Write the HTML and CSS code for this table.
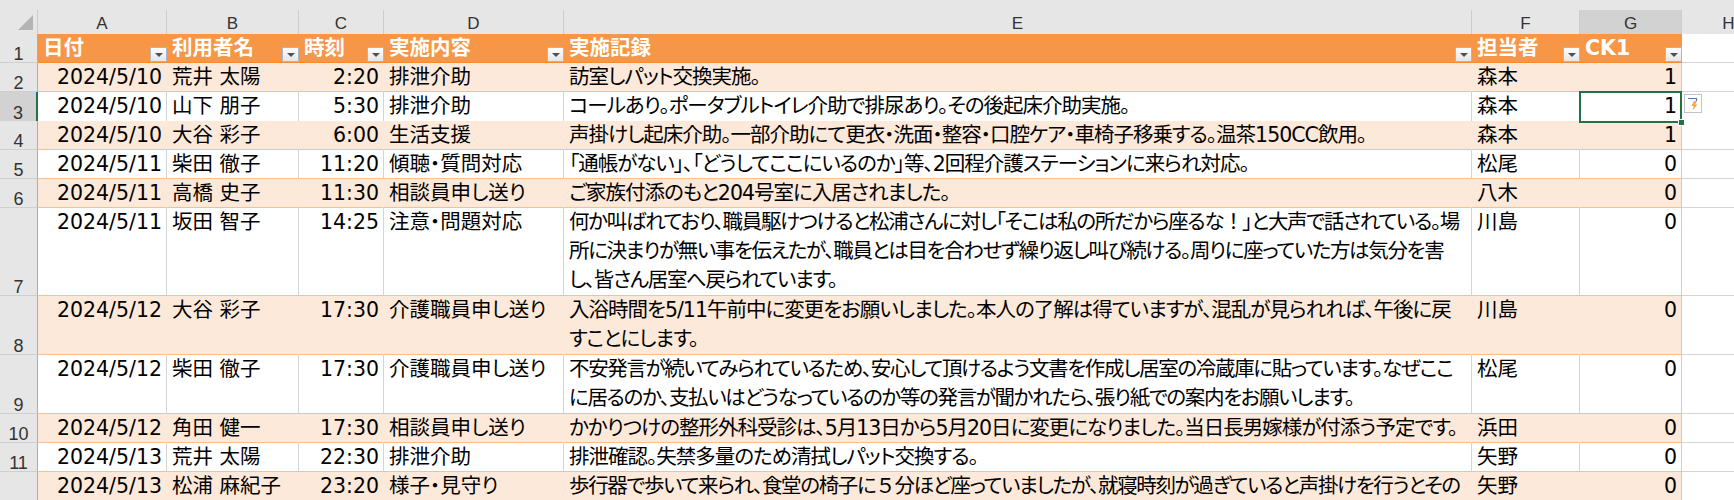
FILE: index.html
```html
<!DOCTYPE html>
<html lang="ja">
<head>
<meta charset="utf-8">
<title>介護記録</title>
<link rel="stylesheet" href="styles.css">
</head>
<body>
<div class="app">
  <div class="topband"></div>

  <div class="row colhdr">
    <div class="corner"><svg width="37" height="23" viewBox="0 0 37 23"><polygon points="33,5 33,20 18,20" fill="#b4b4b4"/></svg></div>
    <div class="ch">A</div>
    <div class="ch">B</div>
    <div class="ch">C</div>
    <div class="ch">D</div>
    <div class="ch">E</div>
    <div class="ch">F</div>
    <div class="ch sel">G</div>
    <div class="ch">H</div>
  </div>

  <div class="row thead r1">
    <div class="rh">1</div>
    <div class="c th">日付<span class="fb"></span></div>
    <div class="c th">利用者名<span class="fb"></span></div>
    <div class="c th">時刻<span class="fb"></span></div>
    <div class="c th">実施内容<span class="fb"></span></div>
    <div class="c th">実施記録<span class="fb"></span></div>
    <div class="c th">担当者<span class="fb"></span></div>
    <div class="c th g">CK1<span class="fb"></span></div>
    <div class="c out"></div>
  </div>

  <div class="row band r1">
    <div class="rh">2</div>
    <div class="c n">2024/5/10</div>
    <div class="c">荒井 太陽</div>
    <div class="c n">2:20</div>
    <div class="c">排泄介助</div>
    <div class="c memo">訪室しパット交換実施。</div>
    <div class="c">森本</div>
    <div class="c n g">1</div>
    <div class="c out"></div>
  </div>

  <div class="row r1">
    <div class="rh sel">3</div>
    <div class="c n">2024/5/10</div>
    <div class="c">山下 朋子</div>
    <div class="c n">5:30</div>
    <div class="c">排泄介助</div>
    <div class="c memo">コールあり。ポータブルトイレ介助で排尿あり。その後起床介助実施。</div>
    <div class="c">森本</div>
    <div class="c n g active">1<span class="selbox"></span><span class="handle"></span><span class="flash"><svg width="18" height="19" viewBox="0 0 18 19"><rect x="0.5" y="0.5" width="17" height="18" fill="#fff" stroke="#c3c3c3"/><path d="M4 4.5 H12.5 V7" fill="none" stroke="#4a7ebb" stroke-width="1.2"/><polygon points="10,7 13,7 11.2,10.5 13.5,10.5 8.5,16.5 9.8,12 7.5,12" fill="#f0a848"/></svg></span></div>
    <div class="c out"></div>
  </div>

  <div class="row band r1">
    <div class="rh">4</div>
    <div class="c n">2024/5/10</div>
    <div class="c">大谷 彩子</div>
    <div class="c n">6:00</div>
    <div class="c">生活支援</div>
    <div class="c memo">声掛けし起床介助。一部介助にて更衣・洗面・整容・口腔ケア・車椅子移乗する。温茶150CC飲用。</div>
    <div class="c">森本</div>
    <div class="c n g">1</div>
    <div class="c out"></div>
  </div>

  <div class="row r1">
    <div class="rh">5</div>
    <div class="c n">2024/5/11</div>
    <div class="c">柴田 徹子</div>
    <div class="c n">11:20</div>
    <div class="c">傾聴・質問対応</div>
    <div class="c memo">「通帳がない」、「どうしてここにいるのか」等、2回程介護ステーションに来られ対応。</div>
    <div class="c">松尾</div>
    <div class="c n g">0</div>
    <div class="c out"></div>
  </div>

  <div class="row band r1">
    <div class="rh">6</div>
    <div class="c n">2024/5/11</div>
    <div class="c">高橋 史子</div>
    <div class="c n">11:30</div>
    <div class="c">相談員申し送り</div>
    <div class="c memo">ご家族付添のもと204号室に入居されました。</div>
    <div class="c">八木</div>
    <div class="c n g">0</div>
    <div class="c out"></div>
  </div>

  <div class="row r3">
    <div class="rh">7</div>
    <div class="c n">2024/5/11</div>
    <div class="c">坂田 智子</div>
    <div class="c n">14:25</div>
    <div class="c">注意・問題対応</div>
    <div class="c memo tight">何か叫ばれており、職員駆けつけると松浦さんに対し「そこは私の所だから座るな<span class="fw">！</span>」と大声で話されている。場<br>所に決まりが無い事を伝えたが、職員とは目を合わせず繰り返し叫び続ける。周りに座っていた方は気分を害<br>し、皆さん居室へ戻られています。</div>
    <div class="c">川島</div>
    <div class="c n g">0</div>
    <div class="c out"></div>
  </div>

  <div class="row band r2">
    <div class="rh">8</div>
    <div class="c n">2024/5/12</div>
    <div class="c">大谷 彩子</div>
    <div class="c n">17:30</div>
    <div class="c">介護職員申し送り</div>
    <div class="c memo">入浴時間を5/11午前中に変更をお願いしました。本人の了解は得ていますが、混乱が見られれば、午後に戻<br>すことにします。</div>
    <div class="c">川島</div>
    <div class="c n g">0</div>
    <div class="c out"></div>
  </div>

  <div class="row r2">
    <div class="rh">9</div>
    <div class="c n">2024/5/12</div>
    <div class="c">柴田 徹子</div>
    <div class="c n">17:30</div>
    <div class="c">介護職員申し送り</div>
    <div class="c memo tight">不安発言が続いてみられているため、安心して頂けるよう文書を作成し居室の冷蔵庫に貼っています。なぜここ<br>に居るのか、支払いはどうなっているのか等の発言が聞かれたら、張り紙での案内をお願いします。</div>
    <div class="c">松尾</div>
    <div class="c n g">0</div>
    <div class="c out"></div>
  </div>

  <div class="row band r1">
    <div class="rh">10</div>
    <div class="c n">2024/5/12</div>
    <div class="c">角田 健一</div>
    <div class="c n">17:30</div>
    <div class="c">相談員申し送り</div>
    <div class="c memo">かかりつけの整形外科受診は、5月13日から5月20日に変更になりました。当日長男嫁様が付添う予定です。</div>
    <div class="c">浜田</div>
    <div class="c n g">0</div>
    <div class="c out"></div>
  </div>

  <div class="row r1">
    <div class="rh">11</div>
    <div class="c n">2024/5/13</div>
    <div class="c">荒井 太陽</div>
    <div class="c n">22:30</div>
    <div class="c">排泄介助</div>
    <div class="c memo">排泄確認。失禁多量のため清拭しパット交換する。</div>
    <div class="c">矢野</div>
    <div class="c n g">0</div>
    <div class="c out"></div>
  </div>

  <div class="row band r3">
    <div class="rh">12</div>
    <div class="c n">2024/5/13</div>
    <div class="c">松浦 麻紀子</div>
    <div class="c n">23:20</div>
    <div class="c">様子・見守り</div>
    <div class="c memo tight">歩行器で歩いて来られ、食堂の椅子に<span class="fw">５</span>分ほど座っていましたが、就寝時刻が過ぎていると声掛けを行うとその</div>
    <div class="c">矢野</div>
    <div class="c n g">0</div>
    <div class="c out"></div>
  </div>
</div>
</body>
</html>
```

FILE: styles.css
```css
html, body {
  margin: 0;
  padding: 0;
  background: #ffffff;
  overflow: hidden;
}

.app {
  width: 1734px;
  height: 500px;
  overflow: hidden;
  font-family: "DejaVu Sans", "Noto Sans CJK JP", sans-serif;
}

.topband {
  height: 10px;
  background: #e6e6e6;
}

.row {
  display: grid;
  grid-template-columns: 38px 129px 132px 85px 180px 908px 108px 102px 94px;
}

.r1 { height: 29px; }
.r2 { height: 59px; }
.r3 { height: 88px; }

/* column letters */
.colhdr {
  height: 24px;
  background: #e6e6e6;
}

.corner,
.ch {
  box-sizing: border-box;
  border-right: 1px solid #cdcdcd;
  border-bottom: 1px solid #9e9e9e;
  background: #e6e6e6;
}

.corner svg {
  display: block;
}

.ch {
  font-family: "Liberation Sans", sans-serif;
  font-size: 17px;
  line-height: 20px;
  padding-top: 4px;
  text-align: center;
  color: #333333;
}

.ch.sel {
  background: #d2d2d2;
  border-bottom: 2px solid #217346;
}

/* row numbers */
.rh {
  box-sizing: border-box;
  background: #e6e6e6;
  border-right: 1px solid #ababab;
  border-bottom: 1px solid #cfcfcf;
  display: flex;
  align-items: flex-end;
  justify-content: center;
  font-family: "Liberation Sans", sans-serif;
  font-size: 18px;
  line-height: 16px;
  color: #333333;
}

.rh.sel {
  background: #d2d2d2;
  border-right: 2px solid #217346;
}

/* data cells */
.c {
  box-sizing: border-box;
  padding: 0 5px;
  white-space: nowrap;
  overflow: hidden;
  font-size: 20.5px;
  line-height: 29px;
  color: #000000;
  background: #ffffff;
  border-right: 1px solid #d4d4d4;
  border-bottom: 1px solid #fabf8f;
  font-feature-settings: "palt";
}

.c.memo {
  letter-spacing: -1px;
}

.c.memo.tight {
  letter-spacing: -1.35px;
}

.fw {
  font-feature-settings: normal;
}

.c.n {
  text-align: right;
  padding-right: 4px;
}

.band .c {
  background: #fde9d9;
  border-right-color: #fde9d9;
}

.row .c.g {
  border-right-color: #fabf8f;
}

.row .c.out {
  background: #ffffff;
  border-right-color: #d4d4d4;
  border-bottom-color: #d4d4d4;
}

/* header row of table */
.thead .c.th {
  position: relative;
  background: #f79646;
  color: #ffffff;
  font-weight: bold;
  line-height: 28px;
  border-right: none;
  border-bottom: 1px solid #f98b2c;
  overflow: visible;
}

.fb {
  position: absolute;
  right: 0;
  bottom: 0;
  width: 17px;
  height: 15px;
  box-sizing: border-box;
  border: 1px solid #a9b8c9;
  background: linear-gradient(#fdfdfd, #e6e6e6);
}

.fb::after {
  content: "";
  position: absolute;
  left: 4px;
  top: 5px;
  border-left: 4px solid transparent;
  border-right: 4px solid transparent;
  border-top: 4px solid #505050;
}

/* active cell */
.c.active {
  position: relative;
  overflow: visible;
}

.selbox {
  position: absolute;
  left: -1px;
  top: -1px;
  right: -1px;
  bottom: -2px;
  border: 2px solid #217346;
  pointer-events: none;
}

.handle {
  position: absolute;
  right: -4px;
  bottom: -5px;
  width: 5px;
  height: 5px;
  background: #217346;
  border: 1px solid #ffffff;
  z-index: 2;
}

.flash {
  position: absolute;
  left: 104px;
  top: 2px;
  width: 18px;
  height: 19px;
  z-index: 3;
}

.flash svg {
  display: block;
}
```
